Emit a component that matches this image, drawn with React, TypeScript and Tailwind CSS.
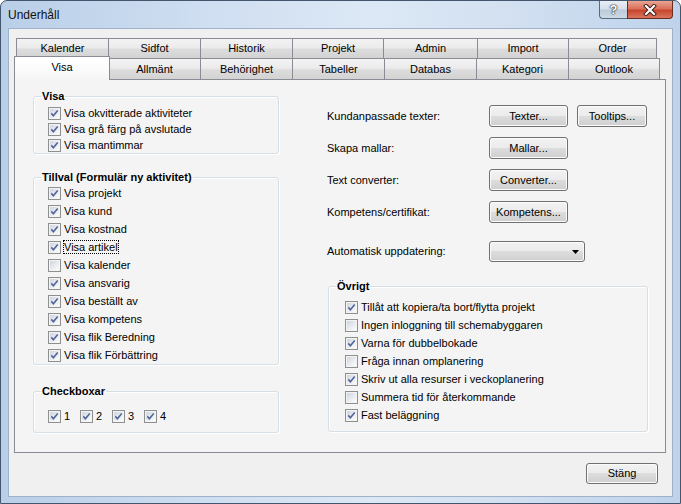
import React from "react";

const row1: [string, number][] = [
  ["Kalender", 92],
  ["Sidfot", 92],
  ["Historik", 92],
  ["Projekt", 91],
  ["Admin", 94],
  ["Import", 91],
  ["Order", 89],
];

const row2 = ["Allmänt", "Behörighet", "Tabeller", "Databas", "Kategori", "Outlook"];

const tabBg =
  "bg-[linear-gradient(to_bottom,#f3f3f3_0%,#ebebeb_45%,#dcdcdc_55%,#d3d3d3_100%)]";

function Box({ checked }: { checked: boolean }) {
  return (
    <span className="relative block w-[13px] h-[13px] shrink-0 border border-[#8e8f8f] bg-[#f4f4f4] p-[1px]">
      <span className="block w-full h-full bg-[linear-gradient(135deg,#cfd5de_0%,#e9ecf1_55%,#fbfbfb_100%)]" />
      {checked && (
        <svg className="absolute -left-[1px] -top-[1px]" width="13" height="13" viewBox="0 0 13 13">
          <path d="M3.3 6.4 L5.4 8.7 L9.7 3.4" fill="none" stroke="#51659a" strokeWidth="1.6" />
        </svg>
      )}
    </span>
  );
}

function Check({
  label,
  checked = true,
  h = "h-[18px]",
  focus = false,
}: {
  label: string;
  checked?: boolean;
  h?: string;
  focus?: boolean;
}) {
  return (
    <div className={`flex items-center gap-[3px] ${h}`}>
      <Box checked={checked} />
      {focus ? (
        <span className="-ml-[1px] border border-dotted border-black leading-[12px]">{label}</span>
      ) : (
        <span className="leading-[13px]">{label}</span>
      )}
    </div>
  );
}

function Btn({ children, className = "" }: { children?: React.ReactNode; className?: string }) {
  return (
    <div
      className={`flex items-center justify-center rounded-[3px] border border-[#707070] bg-[linear-gradient(to_bottom,#f2f2f2_0%,#ebebeb_50%,#dddddd_50%,#cfcfcf_100%)] shadow-[inset_0_0_0_1px_#fbfbfb] ${className}`}
    >
      {children}
    </div>
  );
}

function Group({
  title,
  className = "",
  children,
}: {
  title: string;
  className?: string;
  children: React.ReactNode;
}) {
  return (
    <fieldset
      className={`border border-[#d5dfe5] rounded-[3px] shadow-[inset_1px_1px_0_#ffffff,1px_1px_0_#ffffff] ${className}`}
    >
      <legend className="ml-[7px] px-[1px] font-bold leading-[14px]">{title}</legend>
      {children}
    </fieldset>
  );
}

export default function App() {
  return (
    <div className="w-[681px] h-[504px] rounded-t-[7px] border border-[#43566d] bg-[linear-gradient(to_right,#b9cfe8_0%,#cfdef1_30%,#dce8f5_55%,#d2e0f1_75%,#bed3eb_100%)] font-['Liberation_Sans',Arial,sans-serif] text-[11px] text-black flex flex-col overflow-hidden">
      {/* title bar */}
      <div className="h-[27px] flex items-start">
        <div className="self-center pl-[7px] text-[12px] text-[#111]">Underhåll</div>
        <div className="ml-auto mr-[7px] flex">
          <div className="w-[28px] h-[18px] rounded-bl-[4px] border border-t-0 border-r-0 border-[#5a6b80] bg-[linear-gradient(to_bottom,#e9eef5_0%,#d7e0ea_45%,#bccadb_55%,#cdd9e6_100%)] flex items-center justify-center">
            <span className="text-[13px] font-bold leading-none text-white [text-shadow:0_0_1px_#222,0_0_1px_#222,0_0_2px_#444]">?</span>
          </div>
          <div className="w-[46px] h-[18px] rounded-br-[4px] border border-t-0 border-[#6b2a20] bg-[linear-gradient(to_bottom,#e9a593_0%,#d9705a_45%,#c8452d_55%,#d9765e_100%)] flex items-center justify-center">
            <svg width="14" height="12" viewBox="0 0 14 12">
              <path d="M3 2 L11 10 M11 2 L3 10" stroke="#3a1a14" strokeWidth="4" strokeLinecap="square" />
              <path d="M3 2 L11 10 M11 2 L3 10" stroke="#ffffff" strokeWidth="2.2" strokeLinecap="square" />
            </svg>
          </div>
        </div>
      </div>

      {/* client area */}
      <div className="mx-[7px] w-[665px] h-[469px] border border-[#9fb2c8] bg-[#f0f0f0] flex flex-col">
        <div className="ml-[5px] mt-[9px] w-[652px]">
          {/* tab row 1 */}
          <div className="ml-[2px] flex h-[20px]">
            {row1.map(([t, w], i) => (
              <div
                key={t}
                style={{ width: w }}
                className={`flex items-center justify-center border-t border-l border-[#898c95] ${tabBg} ${
                  i === row1.length - 1 ? "border-r" : ""
                }`}
              >
                {t}
              </div>
            ))}
          </div>
          {/* tab row 2 */}
          <div className="flex h-[21px] items-end">
            <div className="relative z-10 w-[96px] h-[24px] -mb-[1px] -mr-[2px] flex items-center justify-center border-t border-l border-r border-[#898c95] bg-[linear-gradient(to_bottom,#ffffff_0%,#fbfbfb_60%,#f4f4f4_100%)] pb-[2px]">
              Visa
            </div>
            {row2.map((t, i) => (
              <div
                key={t}
                className={`w-[92px] h-[21px] flex items-center justify-center border-t border-l border-[#898c95] ${tabBg} ${
                  i === row2.length - 1 ? "border-r" : ""
                }`}
              >
                {t}
              </div>
            ))}
          </div>

          {/* panel */}
          <div className="h-[374px] border border-[#898c95] bg-[#f4f4f4] flex">
            {/* left column */}
            <div className="ml-[18px] pt-[9px] w-[246px] flex flex-col">
              <Group title="Visa">
                <div className="pl-[14px] pt-[2px]">
                  <Check label="Visa okvitterade aktiviteter" h="h-[16px]" />
                  <Check label="Visa grå färg på avslutade" h="h-[16px]" />
                  <Check label="Visa mantimmar" h="h-[16px]" />
                </div>
              </Group>
              <Group title="Tillval (Formulär ny aktivitet)" className="mt-[16px]">
                <div className="pl-[14px]">
                  <Check label="Visa projekt" />
                  <Check label="Visa kund" />
                  <Check label="Visa kostnad" />
                  <Check label="Visa artikel" focus />
                  <Check label="Visa kalender" checked={false} />
                  <Check label="Visa ansvarig" />
                  <Check label="Visa beställt av" />
                  <Check label="Visa kompetens" />
                  <Check label="Visa flik Beredning" />
                  <Check label="Visa flik Förbättring" />
                </div>
              </Group>
              <Group title="Checkboxar" className="mt-[19px]">
                <div className="pl-[14px] pt-[9px] pb-[7px] flex">
                  {["1", "2", "3", "4"].map((n) => (
                    <div key={n} className="w-[32px]">
                      <Check label={n} />
                    </div>
                  ))}
                </div>
              </Group>
            </div>

            {/* right column */}
            <div className="ml-[48px] pt-[25px] flex flex-col">
              <div className="flex flex-col gap-[10px]">
                <div className="flex items-center h-[22px]">
                  <div className="w-[162px]">Kundanpassade texter:</div>
                  <Btn className="w-[79px] h-[22px]">Texter...</Btn>
                  <Btn className="ml-[9px] w-[70px] h-[22px]">Tooltips...</Btn>
                </div>
                <div className="flex items-center h-[22px]">
                  <div className="w-[162px]">Skapa mallar:</div>
                  <Btn className="w-[79px] h-[22px]">Mallar...</Btn>
                </div>
                <div className="flex items-center h-[22px]">
                  <div className="w-[162px]">Text converter:</div>
                  <Btn className="w-[79px] h-[22px]">Converter...</Btn>
                </div>
                <div className="flex items-center h-[22px]">
                  <div className="w-[162px]">Kompetens/certifikat:</div>
                  <Btn className="w-[79px] h-[22px]">Kompetens...</Btn>
                </div>
              </div>
              <div className="mt-[18px] flex items-center h-[21px]">
                <div className="w-[162px]">Automatisk uppdatering:</div>
                <Btn className="w-[96px] h-[21px] !justify-end pr-[5px]">
                  <svg width="7" height="4" viewBox="0 0 7 4">
                    <path d="M0 0 H7 L3.5 4 Z" fill="#000" />
                  </svg>
                </Btn>
              </div>
              <Group title="Övrigt" className="ml-[1px] mt-[17px] w-[320px]">
                <div className="pl-[16px] pt-[5px] pb-[7px]">
                  <Check label="Tillåt att kopiera/ta bort/flytta projekt" />
                  <Check label="Ingen inloggning till schemabyggaren" checked={false} />
                  <Check label="Varna för dubbelbokade" />
                  <Check label="Fråga innan omplanering" checked={false} />
                  <Check label="Skriv ut alla resurser i veckoplanering" />
                  <Check label="Summera tid för återkommande" checked={false} />
                  <Check label="Fast beläggning" />
                </div>
              </Group>
            </div>
          </div>
        </div>

        <div className="mt-[10px] flex justify-end pr-[14px]">
          <Btn className="w-[72px] h-[21px]">Stäng</Btn>
        </div>
      </div>
    </div>
  );
}
